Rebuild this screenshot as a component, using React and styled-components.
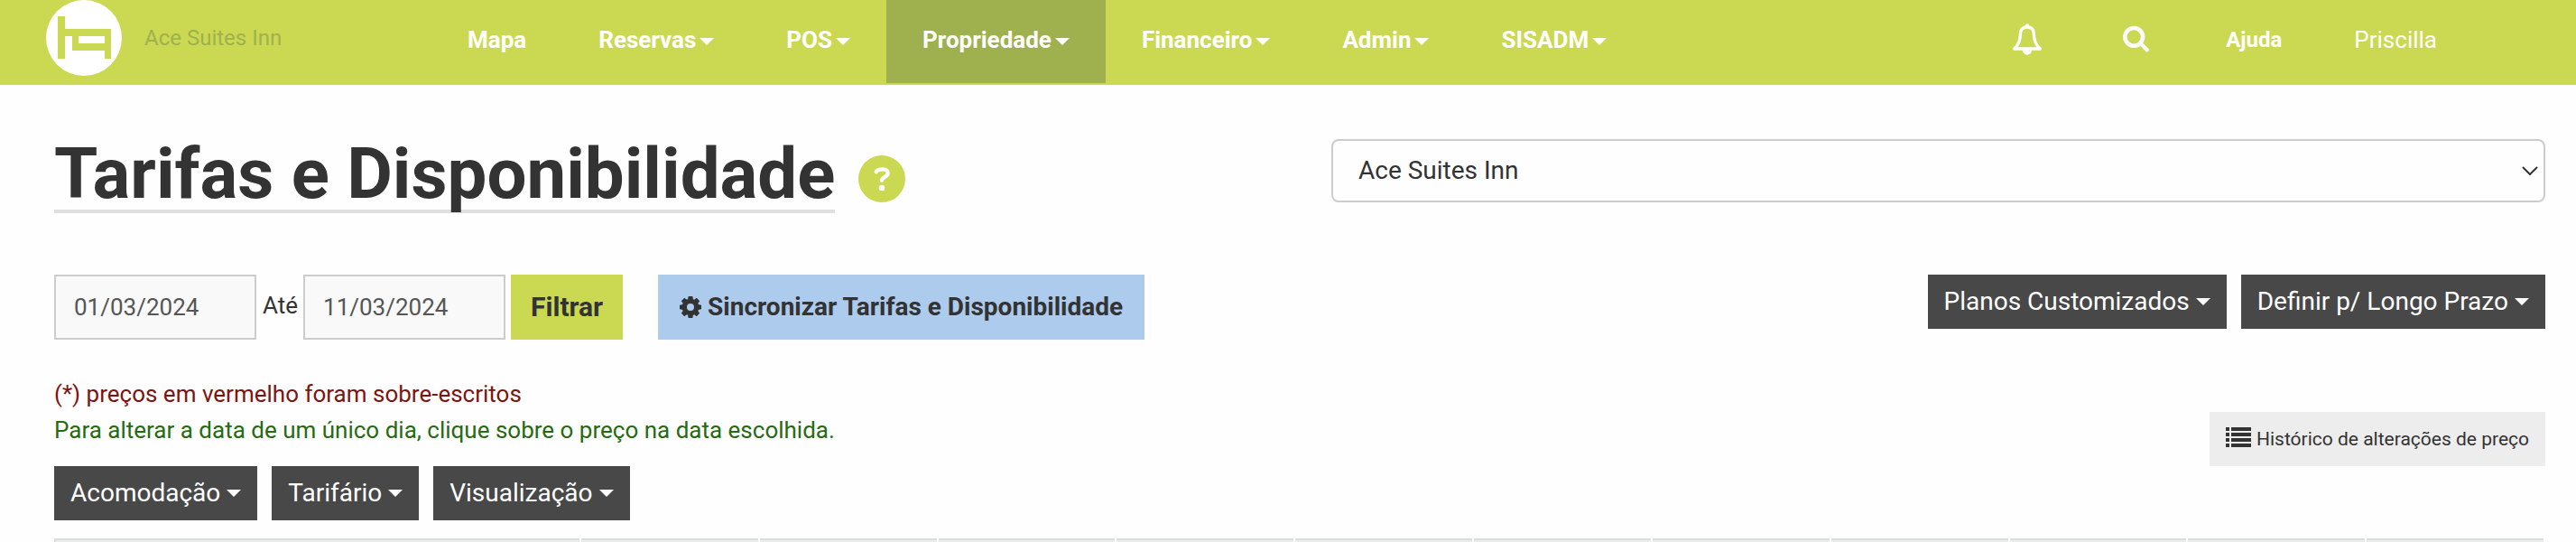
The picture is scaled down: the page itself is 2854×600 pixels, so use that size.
import styled, { createGlobalStyle } from "styled-components";

const GlobalStyle = createGlobalStyle`
  * {
    box-sizing: border-box;
  }
  body {
    margin: 0;
    background: #fefefe;
    color: #333;
    font-family: Roboto, "Liberation Sans", sans-serif;
    font-size: 26px;
    line-height: 40px;
  }
  button,
  input,
  select {
    font: inherit;
    margin: 0;
  }
`;

const Header = styled.header`
  display: flex;
  height: 94px;
  padding: 0 114px 0 51px;
  background: #cbd952;
`;

const Brand = styled.a`
  display: flex;
  gap: 25px;
  width: 427px;
  height: 84px;
  color: #a0b14e;
  font-size: 24px;
  line-height: 84px;
  text-decoration: none;
`;

const Nav = styled.nav`
  display: flex;
  height: 92px;
`;

const UserNav = styled(Nav)`
  margin-left: auto;
`;

const Caret = styled.span`
  border: 8px solid transparent;
  border-top-color: currentColor;
  border-bottom: 0;
`;

const NavLink = styled.a`
  display: flex;
  align-items: center;
  gap: 4px;
  padding: 0 40px 4px;
  background: ${(props) => (props.$active ? "#9fb04e" : "transparent")};
  color: white;
  font-size: ${(props) => (props.$small ? "24px" : "26px")};
  font-weight: ${(props) => (props.$light ? 400 : 700)};
  text-decoration: none;

  ${Caret} {
    margin-top: 4px;
  }
`;

const IconButton = styled.button`
  display: flex;
  align-items: center;
  padding: 0 45px 6px;
  border: none;
  background: none;
  color: white;
  cursor: pointer;
`;

const Main = styled.main`
  padding: 60px 34px 0 60px;
`;

const TitleRow = styled.div`
  display: grid;
  grid-template-columns: 1fr 1fr;
  align-items: start;
`;

const Heading = styled.div`
  display: flex;
  align-items: center;
  gap: 26px;
`;

const Title = styled.h1`
  margin: 0;
  border-bottom: 4px solid #dfdfdf;
  font-size: 78px;
  font-weight: 700;
  line-height: 78px;
`;

const HelpLink = styled.a`
  display: flex;
  margin-top: 6px;
`;

const SelectBox = styled.div`
  position: relative;
  margin-left: 35px;
`;

const Select = styled.select`
  width: 100%;
  height: 70px;
  padding: 0 28px;
  border: 2px solid #ccc;
  border-radius: 8px;
  background: #fefefe;
  color: #333;
  font-size: 28px;
  appearance: none;
`;

const Chevron = styled.svg`
  position: absolute;
  top: 30px;
  right: 8px;
  pointer-events: none;
`;

const FilterRow = styled.div`
  display: flex;
  justify-content: space-between;
  margin-top: 68px;
`;

const FilterForm = styled.form`
  display: flex;
  gap: 6px;
`;

const DateInput = styled.input`
  width: 224px;
  height: 72px;
  padding: 0 20px;
  border: 2px solid #ccc;
  background: #f9f9f9;
  color: #555;
`;

const Label = styled.label`
  margin-left: 1px;
  line-height: 68px;
`;

const FilterButton = styled.button`
  display: flex;
  align-items: center;
  gap: 7px;
  height: 72px;
  padding: 0 22px;
  border: none;
  background: #cbd952;
  color: #333;
  font-size: 30px;
  font-weight: 700;
  cursor: pointer;
`;

const SyncButton = styled(FilterButton)`
  margin-left: 33px;
  padding: 0 24px;
  background: #adcbed;
  font-size: 28px;
`;

const ButtonGroup = styled.div`
  display: flex;
  gap: 16px;
`;

const DarkButton = styled.button`
  display: flex;
  align-items: center;
  gap: 7px;
  height: 60px;
  padding: 0 18px;
  border: none;
  background: #484848;
  color: white;
  font-size: 28px;
  cursor: pointer;
`;

const InfoRow = styled.div`
  display: flex;
  justify-content: space-between;
  align-items: flex-end;
  margin-top: 40px;
`;

const Note = styled.p`
  margin: 0;
  color: ${(props) => props.$color};
`;

const Tools = styled(ButtonGroup)`
  margin-top: 20px;
`;

const HistoryButton = styled(DarkButton)`
  gap: 6px;
  margin-bottom: 60px;
  background: #ededed;
  color: #333;
  font-size: 21px;
`;

const RatesTable = styled.table`
  width: 100%;
  margin-top: 20px;
  border-collapse: collapse;
  table-layout: fixed;
`;

const DayCell = styled.th`
  width: ${(props) => (props.$first ? "582px" : "auto")};
  height: 4px;
  padding: 0;
  border-top: 2px solid #dcdcdc;
  border-right: 2px solid white;
  border-left: 2px solid #dcdcdc;
  background: #e8eceb;
`;

const menu = [
  { label: "Mapa" },
  { label: "Reservas", caret: true },
  { label: "POS", caret: true },
  { label: "Propriedade", caret: true, active: true },
  { label: "Financeiro", caret: true },
  { label: "Admin", caret: true },
  { label: "SISADM", caret: true },
];

const days = Array.from({ length: 11 }, (_, i) => i + 1);

const Logo = () => (
  <svg width="84" height="84" viewBox="0 0 84 84">
    <circle cx="42" cy="42" r="42" fill="white" />
    <path
      d="M13 18h8v14h51v33h-7V56H29V40h-8v25h-8zM36 40v8h29v-8z"
      fill="#cbd952"
      fillRule="evenodd"
    />
  </svg>
);

const BellIcon = () => (
  <svg width="32" height="35" viewBox="90 46 96 105">
    <path
      d="M95 130C108 118 115 105 115 82C115 66 124 58 138 58C152 58 160 66 160 82C160 105 168 118 181 130Z"
      fill="none"
      stroke="currentColor"
      strokeWidth="10"
      strokeLinejoin="round"
    />
    <circle cx="138" cy="53" r="6" fill="currentColor" />
    <path d="M122 134a16 16 0 0 0 32 0z" fill="currentColor" />
  </svg>
);

const SearchIcon = () => (
  <svg width="29" height="30" viewBox="456 57 88 89">
    <g fill="none" stroke="currentColor" strokeWidth="14">
      <circle cx="493" cy="95" r="30" />
      <path d="M515 117L537 139" strokeWidth="13" strokeLinecap="round" />
    </g>
  </svg>
);

const HelpIcon = () => (
  <svg width="52" height="52" viewBox="0 0 156 156">
    <circle cx="78" cy="78" r="78" fill="#cbd952" />
    <path
      d="M59 55C63 47 70 46 80 46C93 46 99 52 98 61C97 71 79 72 78 83"
      fill="none"
      stroke="white"
      strokeWidth="13"
      strokeLinecap="round"
    />
    <circle cx="78" cy="108" r="10" fill="white" />
  </svg>
);

const GearIcon = () => (
  <svg width="24" height="24" viewBox="-36 -36 72 72">
    <circle r="20" fill="none" stroke="currentColor" strokeWidth="16" />
    {[0, 45, 90, 135, 180, 225, 270, 315].map((angle) => (
      <path
        key={angle}
        d="M-9 -25L-7 -36H7L9 -25Z"
        transform={`rotate(${angle})`}
        fill="currentColor"
      />
    ))}
  </svg>
);

const ListIcon = () => (
  <svg width="28" height="26" viewBox="0 0 28 26">
    {[0, 6, 12, 18].map((y) => (
      <g key={y} fill="currentColor">
        <rect y={y} width="4" height="4" />
        <rect x="6" y={y} width="22" height="4" />
      </g>
    ))}
  </svg>
);

const DropdownButton = ({ children }) => (
  <DarkButton type="button">
    {children}
    <Caret />
  </DarkButton>
);

const App = () => {
  return (
    <>
      <GlobalStyle />
      <Header>
        <Brand href="#">
          <Logo />
          Ace Suites Inn
        </Brand>
        <Nav>
          {menu.map((item) => (
            <NavLink href="#" key={item.label} $active={item.active}>
              {item.label}
              {item.caret && <Caret />}
            </NavLink>
          ))}
        </Nav>
        <UserNav>
          <IconButton type="button" aria-label="Notificações">
            <BellIcon />
          </IconButton>
          <IconButton type="button" aria-label="Buscar">
            <SearchIcon />
          </IconButton>
          <NavLink href="#" $small>
            Ajuda
          </NavLink>
          <NavLink href="#" $light>
            Priscilla
          </NavLink>
        </UserNav>
      </Header>
      <Main>
        <TitleRow>
          <Heading>
            <Title>Tarifas e Disponibilidade</Title>
            <HelpLink href="#" aria-label="Ajuda">
              <HelpIcon />
            </HelpLink>
          </Heading>
          <SelectBox>
            <Select aria-label="Propriedade" defaultValue="ace">
              <option value="ace">Ace Suites Inn</option>
            </Select>
            <Chevron width="18" height="10" viewBox="0 0 18 10">
              <path
                d="M1 1L9 9L17 1"
                fill="none"
                stroke="#333"
                strokeWidth="2"
              />
            </Chevron>
          </SelectBox>
        </TitleRow>
        <FilterRow>
          <FilterForm>
            <DateInput
              type="text"
              aria-label="De"
              defaultValue="01/03/2024"
            />
            <Label htmlFor="until">Até</Label>
            <DateInput id="until" type="text" defaultValue="11/03/2024" />
            <FilterButton type="button">Filtrar</FilterButton>
            <SyncButton type="button">
              <GearIcon />
              Sincronizar Tarifas e Disponibilidade
            </SyncButton>
          </FilterForm>
          <ButtonGroup>
            <DropdownButton>Planos Customizados</DropdownButton>
            <DropdownButton>Definir p/ Longo Prazo</DropdownButton>
          </ButtonGroup>
        </FilterRow>
        <InfoRow>
          <div>
            <Note $color="#7e1410">
              (*) preços em vermelho foram sobre-escritos
            </Note>
            <Note $color="#276a12">
              Para alterar a data de um único dia, clique sobre o preço na data
              escolhida.
            </Note>
            <Tools>
              <DropdownButton>Acomodação</DropdownButton>
              <DropdownButton>Tarifário</DropdownButton>
              <DropdownButton>Visualização</DropdownButton>
            </Tools>
          </div>
          <HistoryButton type="button">
            <ListIcon />
            Histórico de alterações de preço
          </HistoryButton>
        </InfoRow>
        <RatesTable>
          <thead>
            <tr>
              <DayCell $first />
              {days.map((day) => (
                <DayCell key={day} />
              ))}
            </tr>
          </thead>
        </RatesTable>
      </Main>
    </>
  );
};

export default App;
